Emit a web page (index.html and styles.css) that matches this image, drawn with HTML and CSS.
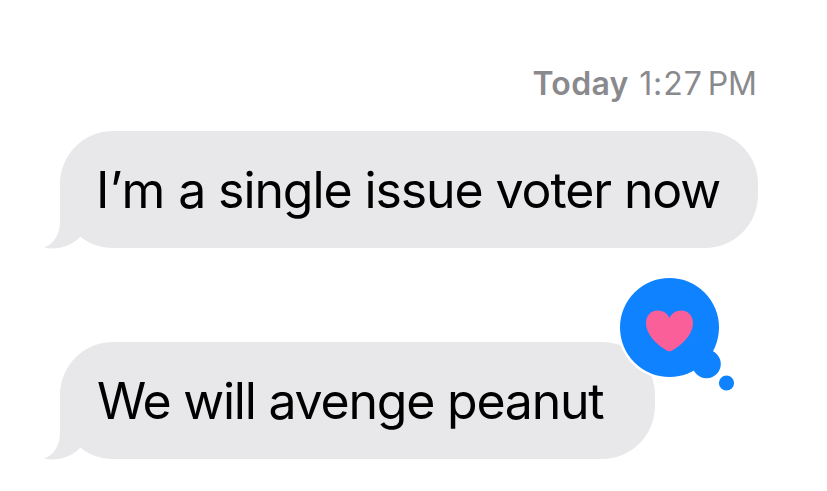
FILE: index.html
```
<!DOCTYPE html>
<html lang="en">
<head>
<meta charset="utf-8">
<title>Messages</title>
<link rel="stylesheet" href="styles.css">
</head>
<body>
<main class="thread">
  <div class="stamp"><span class="day">Today</span><span class="time">1:27</span><span class="period">PM</span></div>
  <div class="bubble bubble-first">
    <svg class="tail" viewBox="0 0 40 70" aria-hidden="true"><path d="M16 0V43C16 54 11 64.500 0 68.500C13 71.500 27 67 35.500 58.500L40 50V0Z"/></svg>
    <span class="text text-first"><span class="lead">I’m</span> a single issue voter now</span>
  </div>
  <div class="bubble bubble-second">
    <svg class="tail" viewBox="0 0 40 70" aria-hidden="true"><path d="M16 0V43C16 54 11 64.500 0 68.500C13 71.500 27 67 35.500 58.500L40 50V0Z"/></svg>
    <span class="text text-second">We will avenge peanut</span>
    <svg class="reaction" viewBox="0 0 124 120" role="img" aria-label="Loved">
      <circle class="ring" cx="53.500" cy="52.500" r="52"/>
      <g class="balloon">
        <circle cx="53.500" cy="52.500" r="49.500"/>
        <circle cx="90.500" cy="89" r="14.300"/>
        <circle cx="110.500" cy="108" r="7.600"/>
      </g>
      <path class="heart" d="M53.500 76.500C51 76.500 30 64 30 48C30 40.500 35 35.500 41.500 35.500C47.500 35.500 51.500 38.500 53.500 43C55.500 38.500 59.500 35.500 65.500 35.500C72 35.500 77 40.500 77 48C77 64 56 76.500 53.500 76.500Z"/>
    </svg>
  </div>
</main>
</body>
</html>
```
FILE: styles.css
```
body {
  margin: 0;
  background: #fff;
  font-family: Inter, "Liberation Sans", sans-serif;
}

.thread {
  box-sizing: border-box;
  width: 827px;
  height: 491px;
  padding: 64px 69px 0 60px;
  overflow: hidden;
}

.stamp {
  box-sizing: border-box;
  display: flex;
  justify-content: flex-end;
  height: 67px;
  padding-right: 1px;
  color: #8a8a8e;
  font-size: 32px;
  line-height: 40px;
}

.day {
  margin-right: 10.5px;
  font-weight: 600;
  letter-spacing: 0.3px;
}

.time {
  margin-right: 5px;
  letter-spacing: 0.9px;
}

.bubble {
  position: relative;
  box-sizing: border-box;
  height: 117px;
  padding-left: 36px;
  border-radius: 53px;
  background: #e8e8ea;
  color: #000;
  font-size: 50px;
  line-height: 119px;
  white-space: nowrap;
}

.bubble-first {
  width: 698px;
}

.bubble-second {
  width: 595px;
  margin-top: 94px;
}

.text-first {
  letter-spacing: -1.1px;
}

.lead {
  letter-spacing: 0;
}

.text-second {
  padding-left: 1px;
  letter-spacing: -1.22px;
}

.tail {
  position: absolute;
  left: -16px;
  bottom: -1px;
  width: 40px;
  height: 70px;
  fill: #e8e8ea;
}

.reaction {
  position: absolute;
  left: 556px;
  top: -67px;
  width: 124px;
  height: 120px;
}

.ring {
  fill: #fff;
}

.balloon {
  fill: #0f82ff;
}

.heart {
  fill: #fb5f99;
}
```
